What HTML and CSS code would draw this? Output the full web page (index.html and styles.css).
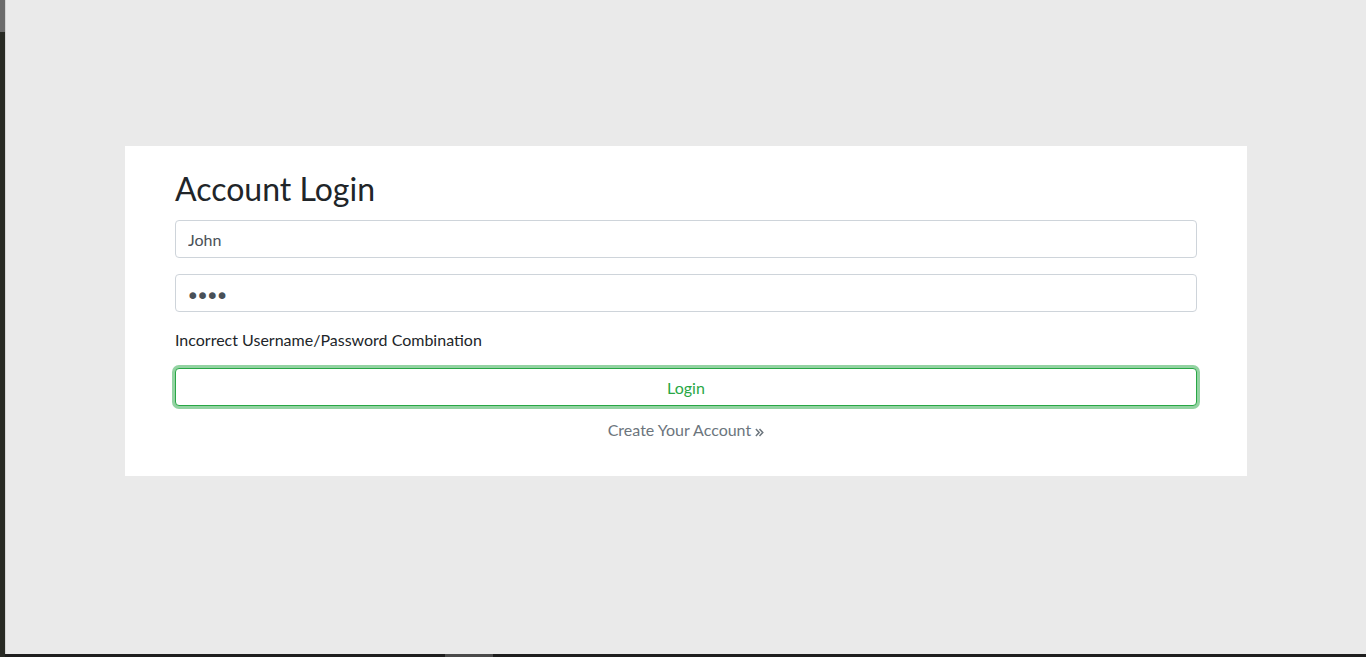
FILE: index.html
```html
<!DOCTYPE html>
<html lang="en">
<head>
<meta charset="utf-8">
<title>Account Login</title>
<link rel="stylesheet" href="styles.css">
</head>
<body>
<div class="frame">
  <div class="edge"><div class="edge-top"></div><div class="edge-rest"></div></div>
  <div class="edge-line"></div>
  <main class="stage">
    <section class="card">
      <h2 class="title">Account Login</h2>
      <form class="form">
        <input class="field" type="text" value="John">
        <input class="field dots" type="password" value="abcd">
        <p class="error">Incorrect Username/Password Combination</p>
        <button class="btn" type="button">Login</button>
        <a class="create" href="#">Create Your Account <svg class="chev" viewBox="0 0 10 10" width="9" height="9" aria-hidden="true"><path d="M1 1.2 L4.6 5 L1 8.8 M5 1.2 L8.6 5 L5 8.8" fill="none" stroke="currentColor" stroke-width="1.7"/></svg></a>
      </form>
    </section>
  </main>
  <div class="bottom-bar"><div class="thumb"></div></div>
</div>
</body>
</html>
```

FILE: styles.css
```css
* { box-sizing: border-box; }
html, body { margin: 0; height: 100%; }
body {
  font-family: "Lato", "Open Sans", sans-serif;
  background: #e9e9e9;
  color: #212529;
  overflow: hidden;
}
.frame {
  display: grid;
  grid-template-columns: 5px 1px 1fr;
  grid-template-rows: 654px 3px;
  height: 657px;
}
.edge {
  display: flex;
  flex-direction: column;
  grid-row: 1 / 3;
}
.edge-top { height: 32px; background: #6b6b6b; }
.edge-rest { flex: 1; background: #282a24; }
.edge-line { background: #d4d4d4; grid-row: 1; }
.stage {
  background: #eaeaea;
  padding-top: 146px;
  display: flex;
  justify-content: center;
  align-items: flex-start;
}
.card {
  width: 1122px;
  background: #fff;
  padding: 24px 50px 34px;
}
.title {
  margin: 0 0 12px;
  font-size: 32px;
  font-weight: 400;
  line-height: 1.2;
  color: #212529;
}
.form { display: flex; flex-direction: column; }
.field {
  display: block;
  width: 100%;
  height: 38px;
  padding: 6px 12px;
  font: inherit;
  font-size: 16px;
  color: #495057;
  background: #fff;
  border: 1px solid #ced4da;
  border-radius: 4px;
  margin-bottom: 16px;
  outline: none;
}
.dots {
  font-family: "DejaVu Sans", sans-serif;
  font-size: 23px;
  letter-spacing: -3.8px;
  padding: 9px 10px 3px;
}
.error {
  margin: 0 0 16px;
  font-size: 16px;
  line-height: 24px;
  color: #212529;
}
.btn {
  height: 38px;
  font: inherit;
  font-size: 16px;
  color: #28a745;
  background: #fff;
  border: 1px solid #28a745;
  border-radius: 4px;
  box-shadow: 0 0 0 3px rgba(40, 167, 69, 0.5);
  cursor: pointer;
}
.create {
  align-self: center;
  margin-top: 12px;
  font-size: 16px;
  line-height: 24px;
  color: #6c757d;
  text-decoration: none;
}
.chev { vertical-align: -0.5px; }
.bottom-bar {
  grid-column: 2 / 4;
  grid-row: 2;
  background: #1e1e1e;
  display: flex;
}
.thumb {
  margin-left: 440px;
  width: 48px;
  background: #4a4a4a;
}
```
